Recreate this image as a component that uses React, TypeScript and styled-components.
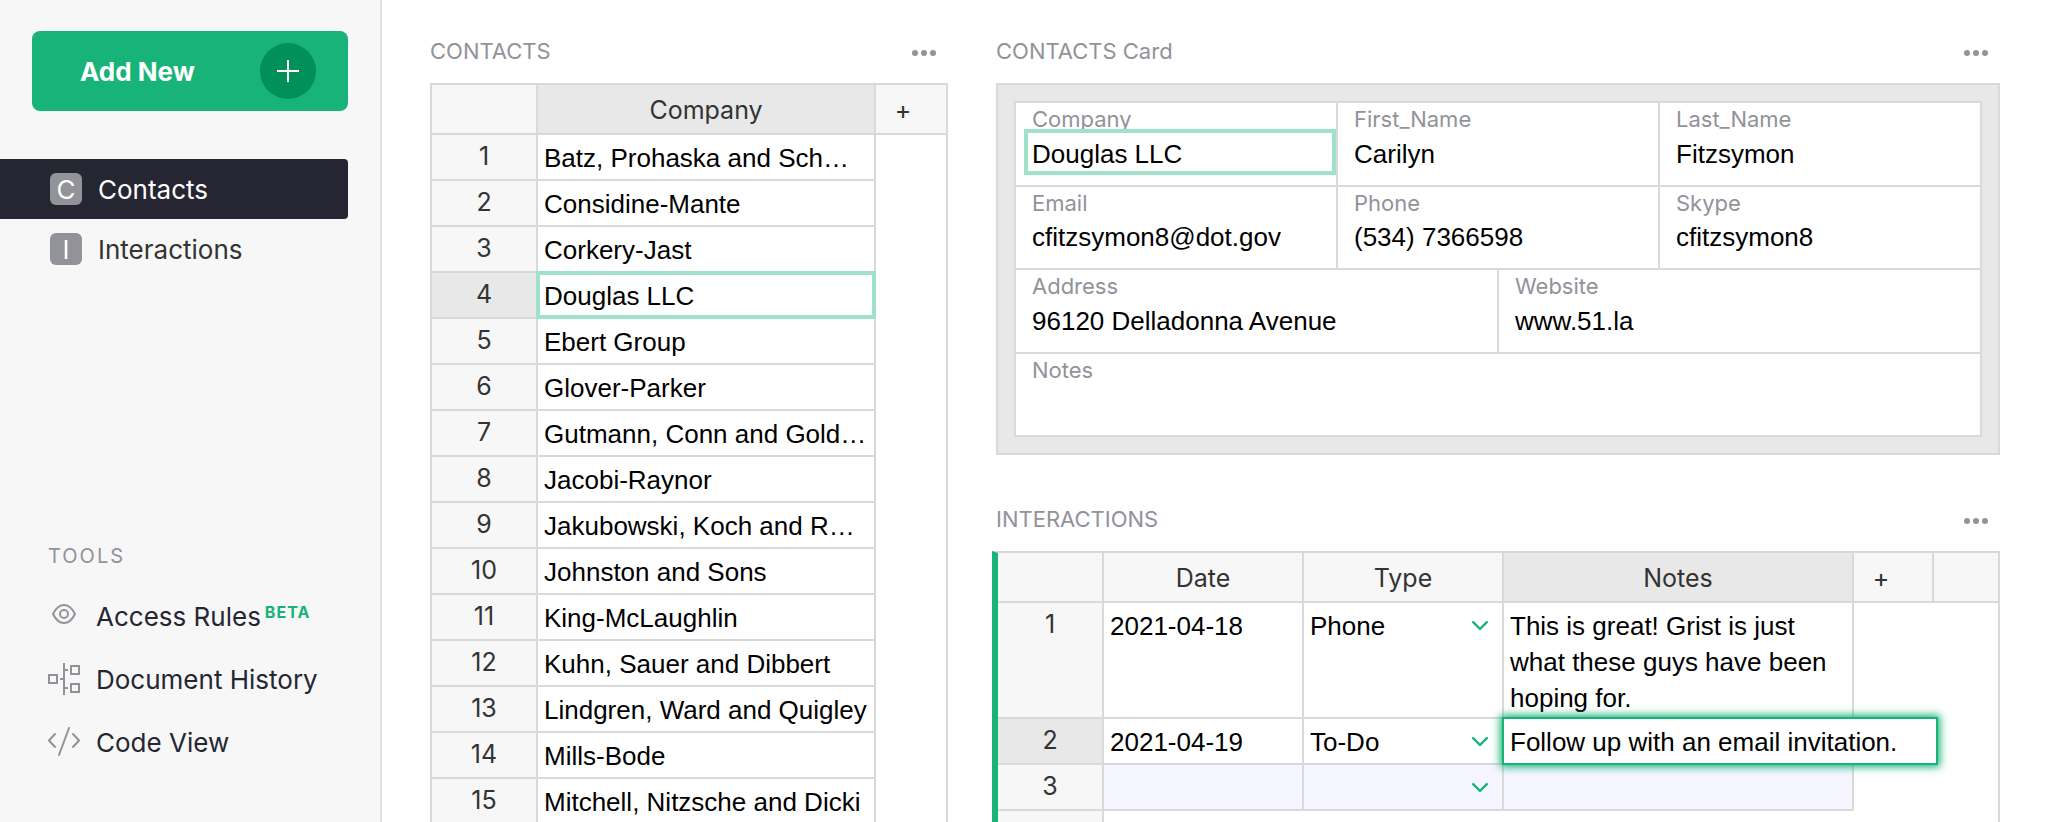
import React from "react";
import styled, { createGlobalStyle } from "styled-components";

const color = {
  green: "#17b378",
  greenDark: "#009058",
  greenLight: "#9fe2c9",
  dark: "#262633",
  slate: "#929299",
  line: "#d9d9d9",
  panel: "#f7f7f7",
  shade: "#e8e8e8",
  text: "#333333",
  newRow: "#f5f5ff",
};

const uiFont = `Inter, "Liberation Sans", sans-serif`;
const dataFont = `"Liberation Sans", Arial, sans-serif`;

const GlobalStyle = createGlobalStyle`
  *, *::before, *::after { box-sizing: border-box; }
  body { margin: 0; background: #fff; font-family: ${uiFont}; color: ${color.text}; }
  button, input, select, textarea { margin: 0; padding: 0; border: 0; background: none; outline: none; color: inherit; }
  button { cursor: pointer; }
`;

const Page = styled.div`
  display: flex;
  height: 100vh;
  overflow: hidden;
`;

const Sidebar = styled.aside`
  flex: none;
  width: 382px;
  border-right: 2px solid #e0e0e0;
  background: ${color.panel};
  padding: 31px 32px 0 0;
`;

const AddButton = styled.button`
  display: flex;
  align-items: center;
  justify-content: space-between;
  width: calc(100% - 32px);
  height: 80px;
  margin-left: 32px;
  padding: 0 32px 0 48px;
  border-radius: 8px;
  background: ${color.green};
  color: #fff;
  font: 700 26px/34px ${uiFont};
`;

const PlusCircle = styled.span`
  display: grid;
  place-items: center;
  width: 56px;
  height: 56px;
  border-radius: 50%;
  background: ${color.greenDark};
`;

const PageList = styled.nav`
  display: flex;
  flex-direction: column;
  margin-top: 48px;
`;

const PageLink = styled.a<{ $active?: boolean }>`
  display: flex;
  align-items: center;
  gap: 16px;
  height: 60px;
  padding-left: 50px;
  border-radius: 0 4px 4px 0;
  background: ${(p) => (p.$active ? color.dark : "transparent")};
  color: ${(p) => (p.$active ? "#fff" : color.text)};
  font-size: 26px;
  line-height: 34px;
  text-decoration: none;
`;

const PageInitial = styled.span`
  width: 32px;
  height: 32px;
  border-radius: 6px;
  background: ${color.slate};
  color: #fff;
  line-height: 34px;
  text-align: center;
`;

const ToolsHeading = styled.h2`
  margin: 264px 0 0 48px;
  color: ${color.slate};
  font-size: 20px;
  line-height: 26px;
  font-weight: 400;
  letter-spacing: 2px;
`;

const ToolLink = styled.a`
  display: flex;
  align-items: center;
  gap: 16px;
  height: 32px;
  margin-left: 48px;
  color: ${color.dark};
  font-size: 26px;
  line-height: 34px;
  text-decoration: none;
`;

const ToolList = styled.nav`
  display: flex;
  flex-direction: column;
  gap: 31px;
  margin-top: 31px;
`;

const LinkText = styled.span`
  padding-top: 2px;
`;

const Beta = styled.sup`
  align-self: flex-start;
  margin-left: -12px;
  color: ${color.green};
  font-size: 16px;
  line-height: 24px;
  font-weight: 700;
  letter-spacing: 1px;
`;

const Main = styled.main`
  flex: 1;
  min-width: 0;
  display: grid;
  grid-template-columns: minmax(0, 518fr) minmax(0, 1004fr);
  gap: 48px;
  padding: 36px 48px 0;
`;

const Column = styled.div`
  display: flex;
  flex-direction: column;
  min-width: 0;
  min-height: 0;
`;

const Section = styled.section<{ $grow?: boolean }>`
  display: flex;
  flex-direction: column;
  flex: ${(p) => (p.$grow ? "1" : "none")};
  min-height: 0;

  & + & { margin-top: 49px; }
`;

const SectionHead = styled.header`
  display: flex;
  align-items: center;
  justify-content: space-between;
  height: 32px;
  margin-bottom: 15px;
  padding-right: 10px;
`;

const SectionTitle = styled.h2`
  margin: 0;
  padding-bottom: 2px;
  color: ${color.slate};
  font-size: 22px;
  line-height: 30px;
  font-weight: 400;
`;

const MenuButton = styled.button`
  display: grid;
  place-items: center;
  width: 28px;
  height: 28px;
  padding-top: 2px;
`;

const GridFrame = styled.div<{ $active?: boolean }>`
  flex: 1;
  min-height: 0;
  overflow: hidden;
  margin-left: ${(p) => (p.$active ? "-4px" : "0")};
  border: 2px solid ${color.line};
  border-bottom: 0;
  border-left: ${(p) => (p.$active ? `6px solid ${color.green}` : `2px solid ${color.line}`)};
`;

const Table = styled.table`
  width: 100%;
  height: 100%;
  table-layout: fixed;
  border-collapse: separate;
  border-spacing: 0;
`;

const Col = styled.col<{ $w?: number }>`
  width: ${(p) => (p.$w ? `${p.$w}px` : "auto")};
`;

const HeadCell = styled.th<{ $selected?: boolean; $last?: boolean }>`
  height: 50px;
  padding: 2px 0 0;
  border-right: ${(p) => (p.$last ? "0" : `2px solid ${color.line}`)};
  border-bottom: 2px solid ${color.line};
  background: ${(p) => (p.$selected ? color.shade : color.panel)};
  font-size: 25px;
  line-height: 36px;
  font-weight: 400;
`;

const AddColumn = styled.button`
  display: block;
  width: 54px;
  height: 36px;
  font: 400 25px/36px ${uiFont};
`;

const RowNumber = styled.th<{ $selected?: boolean; $open?: boolean }>`
  height: ${(p) => (p.$open ? "auto" : "46px")};
  padding: 3px 0 1px;
  border-right: 2px solid ${color.line};
  border-bottom: ${(p) => (p.$open ? "0" : `2px solid ${color.line}`)};
  background: ${(p) => (p.$selected ? color.shade : color.panel)};
  font-size: 25px;
  line-height: 36px;
  font-weight: 400;
  vertical-align: top;
`;

const Cell = styled.td<{ $selected?: boolean; $blank?: boolean }>`
  position: relative;
  padding: 5px 6px 1px;
  border-right: 2px solid ${color.line};
  border-bottom: 2px solid ${color.line};
  background: ${(p) => (p.$blank ? color.newRow : "#fff")};
  color: #000;
  font: 400 26px/36px ${dataFont};
  vertical-align: top;
  white-space: nowrap;

  &::after {
    content: ${(p) => (p.$selected ? '""' : "none")};
    position: absolute;
    inset: -2px;
    border: 4px solid ${color.greenLight};
  }
`;

const NotesCell = styled(Cell)`
  white-space: normal;
`;

const OpenCell = styled.td`
  padding: 0;
`;

const ChoiceBox = styled.div`
  display: grid;
  align-items: center;

  & > * { grid-area: 1 / 1; }
  & > svg { justify-self: end; margin-right: 8px; pointer-events: none; }
`;

const Choice = styled.select`
  appearance: none;
  width: 100%;
  height: 36px;
  color: #000;
  font: 400 26px/36px ${dataFont};
`;

const CellEditor = styled.input`
  && {
    position: absolute;
    z-index: 1;
    top: -2px;
    left: -2px;
    width: 436px;
    height: 48px;
    padding: 3px 6px 0;
    border: 2px solid ${color.green};
    background: #fff;
    box-shadow: 0 0 8px 2px ${color.green};
    color: #000;
    font: 400 26px/36px ${dataFont};
  }
`;

const CardFrame = styled.div`
  border: 2px solid ${color.line};
  background: ${color.shade};
  padding: 16px;
`;

const Card = styled.form`
  display: grid;
  grid-auto-rows: 1fr;
  gap: 2px;
  min-height: 336px;
  border: 2px solid ${color.line};
  background: ${color.line};
`;

const CardRow = styled.div`
  display: flex;
  gap: 2px;
`;

const Field = styled.div`
  flex: 1;
  min-width: 0;
  display: flex;
  flex-direction: column;
  padding: 2px 0 0 8px;
  background: #fff;
`;

const FieldLabel = styled.label`
  height: 24px;
  padding-left: 8px;
  color: ${color.slate};
  font-size: 22px;
  line-height: 28px;
`;

const FieldInput = styled.input<{ $selected?: boolean }>`
  && {
    width: 100%;
    height: 46px;
    padding: 6px 4px 2px;
    border: 4px solid ${(p) => (p.$selected ? color.greenLight : "transparent")};
    background: ${(p) => (p.$selected ? "#fff" : "transparent")};
    color: #000;
    font: 400 26px/30px ${dataFont};
  }
`;

const PlusIcon = () => (
  <svg width="22" height="22" viewBox="0 0 22 22" stroke="#fff" strokeWidth="2" aria-hidden="true">
    <path d="M11 0v22M0 11h22" />
  </svg>
);

const DotsIcon = () => (
  <svg width="24" height="6" viewBox="0 0 24 6" fill={color.slate} aria-hidden="true">
    <circle cx="3" cy="3" r="3" />
    <circle cx="12" cy="3" r="3" />
    <circle cx="21" cy="3" r="3" />
  </svg>
);

const ChevronIcon = () => (
  <svg width="16" height="10" viewBox="0 0 16 10" fill="none" stroke={color.green} strokeWidth="2.4" strokeLinecap="round" strokeLinejoin="round" aria-hidden="true">
    <path d="M1.2 1.2L8 8l6.800-6.800" />
  </svg>
);

const ToolIcon = ({ children }: { children: React.ReactNode }) => (
  <svg width="32" height="32" viewBox="0 0 32 32" fill="none" stroke={color.slate} strokeWidth="2" strokeLinejoin="round" aria-hidden="true">
    {children}
  </svg>
);

const EyeIcon = () => (
  <ToolIcon>
    <path d="M5 14c2-4 5.500-9 11-9s9 5 11 9c-2 4-5.500 9-11 9s-9-5-11-9z" />
    <circle cx="16" cy="14" r="4" />
  </ToolIcon>
);

const HistoryIcon = () => (
  <ToolIcon>
    <path d="M16 0v32M12 16h4M16 7h4M16 25h4M1 12h8v8H1zM23 3h8v8h-8zM23 21h8v8h-8z" strokeLinejoin="miter" />
  </ToolIcon>
);

const CodeIcon = () => (
  <ToolIcon>
    <path d="M7 8l-6 6.500L7 21M25 8l6 6.500L25 21M21 2L11 29" strokeLinecap="round" />
  </ToolIcon>
);

const companies = [
  "Batz, Prohaska and Sch…",
  "Considine-Mante",
  "Corkery-Jast",
  "Douglas LLC",
  "Ebert Group",
  "Glover-Parker",
  "Gutmann, Conn and Gold…",
  "Jacobi-Raynor",
  "Jakubowski, Koch and R…",
  "Johnston and Sons",
  "King-McLaughlin",
  "Kuhn, Sauer and Dibbert",
  "Lindgren, Ward and Quigley",
  "Mills-Bode",
  "Mitchell, Nitzsche and Dicki",
];

const cardRows = [
  [["Company", "Douglas LLC"], ["First_Name", "Carilyn"], ["Last_Name", "Fitzsymon"]],
  [["Email", "cfitzsymon8@dot.gov"], ["Phone", "(534) 7366598"], ["Skype", "cfitzsymon8"]],
  [["Address", "96120 Delladonna Avenue"], ["Website", "www.51.la"]],
  [["Notes", ""]],
];

const interactions = [
  { date: "2021-04-18", type: "Phone", notes: "This is great! Grist is just what these guys have been hoping for." },
  { date: "2021-04-19", type: "To-Do", notes: "Follow up with an email invitation.", editing: true },
  { date: "", type: "", notes: "", blank: true },
];

const SectionHeader = ({ title }: { title: string }) => (
  <SectionHead>
    <SectionTitle>{title}</SectionTitle>
    <MenuButton type="button" aria-label={`${title} options`}>
      <DotsIcon />
    </MenuButton>
  </SectionHead>
);

const ContactsGrid = () => (
  <GridFrame>
    <Table>
      <colgroup>
        <Col $w={106} />
        <Col $w={338} />
        <Col />
      </colgroup>
      <thead>
        <tr>
          <HeadCell aria-label="Row" />
          <HeadCell $selected>Company</HeadCell>
          <HeadCell $last>
            <AddColumn type="button" aria-label="Add column">+</AddColumn>
          </HeadCell>
        </tr>
      </thead>
      <tbody>
        {companies.map((name, i) => (
          <tr key={name}>
            <RowNumber $selected={i === 3}>{i + 1}</RowNumber>
            <Cell $selected={i === 3}>{name}</Cell>
            <OpenCell />
          </tr>
        ))}
        <tr>
          <RowNumber $open />
          <OpenCell />
          <OpenCell />
        </tr>
      </tbody>
    </Table>
  </GridFrame>
);

const ContactCard = () => (
  <CardFrame>
    <Card>
      {cardRows.map((row) => (
        <CardRow key={row[0][0]}>
          {row.map(([label, value]) => (
            <Field key={label}>
              <FieldLabel htmlFor={`card-${label}`}>{label}</FieldLabel>
              <FieldInput id={`card-${label}`} defaultValue={value} $selected={label === "Company"} />
            </Field>
          ))}
        </CardRow>
      ))}
    </Card>
  </CardFrame>
);

const InteractionsGrid = () => (
  <GridFrame $active>
    <Table>
      <colgroup>
        <Col $w={106} />
        <Col $w={200} />
        <Col $w={200} />
        <Col $w={350} />
        <Col $w={80} />
        <Col />
      </colgroup>
      <thead>
        <tr>
          <HeadCell aria-label="Row" />
          <HeadCell>Date</HeadCell>
          <HeadCell>Type</HeadCell>
          <HeadCell $selected>Notes</HeadCell>
          <HeadCell>
            <AddColumn type="button" aria-label="Add column">+</AddColumn>
          </HeadCell>
          <HeadCell $last />
        </tr>
      </thead>
      <tbody>
        {interactions.map((row, i) => (
          <tr key={i}>
            <RowNumber $selected={row.editing}>{i + 1}</RowNumber>
            <Cell $blank={row.blank}>{row.date}</Cell>
            <Cell $blank={row.blank}>
              <ChoiceBox>
                <Choice aria-label={`Type, row ${i + 1}`} defaultValue={row.type}>
                  <option value="" />
                  <option>Phone</option>
                  <option>To-Do</option>
                </Choice>
                <ChevronIcon />
              </ChoiceBox>
            </Cell>
            <NotesCell $blank={row.blank}>
              {row.editing ? <CellEditor aria-label="Notes, row 2" defaultValue={row.notes} /> : row.notes}
            </NotesCell>
            <OpenCell colSpan={2} />
          </tr>
        ))}
        <tr>
          <RowNumber $open />
          <OpenCell colSpan={5} />
        </tr>
      </tbody>
    </Table>
  </GridFrame>
);

export default function App() {
  return (
    <>
      <GlobalStyle />
      <Page>
        <Sidebar>
          <AddButton type="button">
            <LinkText>Add New</LinkText>
            <PlusCircle>
              <PlusIcon />
            </PlusCircle>
          </AddButton>
          <PageList aria-label="Pages">
            <PageLink href="#contacts" $active>
              <PageInitial>C</PageInitial>
              <LinkText>Contacts</LinkText>
            </PageLink>
            <PageLink href="#interactions">
              <PageInitial>I</PageInitial>
              <LinkText>Interactions</LinkText>
            </PageLink>
          </PageList>
          <ToolsHeading>TOOLS</ToolsHeading>
          <ToolList aria-label="Tools">
            <ToolLink href="#access">
              <EyeIcon />
              <LinkText>Access Rules</LinkText>
              <Beta>BETA</Beta>
            </ToolLink>
            <ToolLink href="#history">
              <HistoryIcon />
              <LinkText>Document History</LinkText>
            </ToolLink>
            <ToolLink href="#code">
              <CodeIcon />
              <LinkText>Code View</LinkText>
            </ToolLink>
          </ToolList>
        </Sidebar>
        <Main>
          <Column>
            <Section $grow>
              <SectionHeader title="CONTACTS" />
              <ContactsGrid />
            </Section>
          </Column>
          <Column>
            <Section>
              <SectionHeader title="CONTACTS Card" />
              <ContactCard />
            </Section>
            <Section $grow>
              <SectionHeader title="INTERACTIONS" />
              <InteractionsGrid />
            </Section>
          </Column>
        </Main>
      </Page>
    </>
  );
}
